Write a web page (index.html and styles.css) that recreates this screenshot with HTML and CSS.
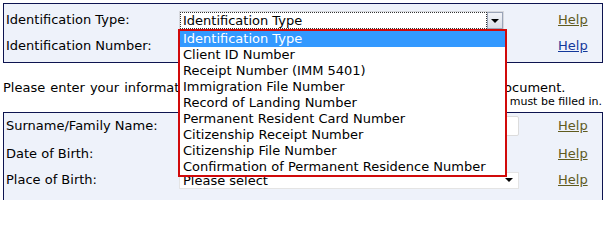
FILE: index.html
```html
<!DOCTYPE html>
<html>
<head>
<meta charset="utf-8">
<link rel="stylesheet" href="styles.css">
</head>
<body>
<div class="page">
  <div class="box box-top">
    <div class="label">Identification Type:</div>
    <div class="field field-top">
      <div class="select focused">
        <span class="select-text"><span class="focus-ring">Identification Type</span></span>
        <span class="select-btn"><span class="tri"></span></span>
        <ul class="dropdown">
          <li class="selected">Identification Type</li>
          <li>Client ID Number</li>
          <li>Receipt Number (IMM 5401)</li>
          <li>Immigration File Number</li>
          <li>Record of Landing Number</li>
          <li>Permanent Resident Card Number</li>
          <li>Citizenship Receipt Number</li>
          <li>Citizenship File Number</li>
          <li>Confirmation of Permanent Residence Number</li>
        </ul>
      </div>
    </div>
    <div class="help"><a class="visited" href="#">Help</a></div>
    <div class="label">Identification Number:</div>
    <div class="field"></div>
    <div class="help"><a class="link" href="#">Help</a></div>
  </div>

  <div class="intro">
    <p class="intro-main">Please enter your information exactly as it is written on your immigration document.</p>
    <p class="intro-note">Fields marked with an asterisk (*) must be filled in.</p>
  </div>

  <div class="box box-bottom">
    <div class="label">Surname/Family Name:</div>
    <div class="field"><span class="input"></span></div>
    <div class="help"><a class="visited" href="#">Help</a></div>
    <div class="label">Date of Birth:</div>
    <div class="field"></div>
    <div class="help"><a class="visited" href="#">Help</a></div>
    <div class="label">Place of Birth:</div>
    <div class="field"><span class="select2"><span class="select2-text">Please select</span><span class="tri"></span></span></div>
    <div class="help"><a class="visited" href="#">Help</a></div>
  </div>
</div>
</body>
</html>
```

FILE: styles.css
```css
html, body {
  margin: 0;
  padding: 0;
  background: #ffffff;
}
body {
  font-family: "DejaVu Sans", Verdana, sans-serif;
  font-size: 13px;
  color: #000000;
  overflow: hidden;
}
.page {
  padding: 3px 0 0 3px;
  width: 600px;
}
.box {
  border: 1px solid #0d1450;
  background: #eef2fa;
  display: grid;
  grid-template-columns: 173px 379px 1fr;
  padding-left: 2px;
}
.box-top {
  padding-top: 2px;
  padding-bottom: 4px;
  grid-template-rows: 26px 26px;
  position: relative;
  z-index: 2;
}
.box-bottom {
  margin-top: 4px;
  padding-top: 2px;
  grid-template-rows: 21px 34px 18px 12px;
  border-bottom: none;
}
.label, .help {
  display: flex;
  align-items: center;
  white-space: nowrap;
}
.field {
  display: flex;
  align-items: center;
}
.field-top {
  align-items: flex-start;
}
.help a {
  text-decoration: underline;
}
.help .visited { color: #605b1e; }
.help .link { color: #13389a; }

.select {
  position: relative;
  width: 325px;
  height: 19px;
  box-sizing: border-box;
  background: #ffffff;
  border: 1px solid #d7d9de;
  display: flex;
  align-items: stretch;
  margin-top: 5px;
}
.select-text {
  flex: 1;
  display: flex;
  align-items: stretch;
}
.focus-ring {
  flex: 1;
  border: 1px dotted #333;
  padding-left: 2px;
  line-height: 15px;
  white-space: nowrap;
}
.select-btn {
  width: 16px;
  box-sizing: border-box;
  border: 1px solid #9aa4b8;
  background: linear-gradient(#f2f4f8, #d9dee8);
  display: flex;
  align-items: center;
  justify-content: center;
}
.tri {
  width: 0;
  height: 0;
  border-left: 4px solid transparent;
  border-right: 4px solid transparent;
  border-top: 4px solid #000;
}
.dropdown {
  position: absolute;
  left: -2px;
  top: 17px;
  width: 329px;
  box-sizing: border-box;
  margin: 0;
  padding: 0;
  list-style: none;
  border: 2px solid #d10a0a;
  background: #ffffff;
  z-index: 10;
}
.dropdown li {
  height: 16px;
  line-height: 16px;
  padding-left: 3px;
  white-space: nowrap;
}
.dropdown li.selected {
  background: #3399ff;
  color: #ffffff;
}

.intro {
  margin-top: 17px;
}
.intro p {
  margin: 0;
  white-space: nowrap;
}
.intro-main {
  line-height: 15px;
  word-spacing: 0.9px;
}
.intro-note {
  font-size: 11px;
  line-height: 13px;
  text-align: right;
  padding-right: 1px;
}

.input {
  width: 340px;
  height: 20px;
  box-sizing: border-box;
  border: 1px solid #dcdcdc;
  border-radius: 2px;
  background: #ffffff;
}
.select2 {
  width: 340px;
  height: 17px;
  box-sizing: border-box;
  border: 1px solid #e4e4e4;
  background: #ffffff;
  display: flex;
  align-items: center;
  padding-right: 5px;
  margin-top: 2px;
}
.select2-text {
  flex: 1;
  padding-left: 3px;
  line-height: 15px;
}
```
